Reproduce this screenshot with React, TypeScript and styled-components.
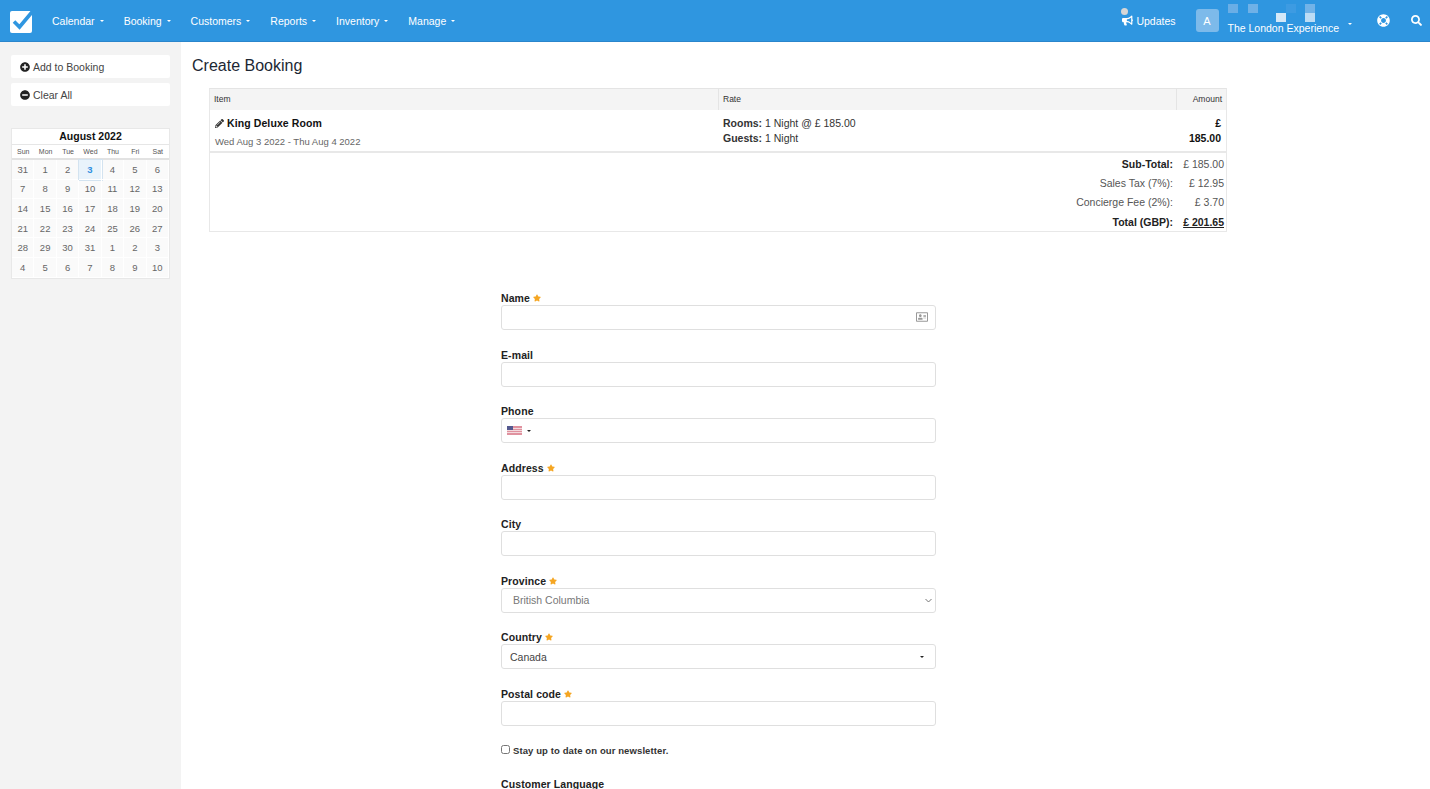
import React from "react";
import styled, { createGlobalStyle } from "styled-components";
import { FaPlusCircle, FaMinusCircle, FaPencilAlt, FaBullhorn, FaLifeRing, FaSearch, FaRegAddressCard, FaStar } from "react-icons/fa";

const Global = createGlobalStyle`
  html, body { margin: 0; height: 100%; overflow: hidden; background: #fff; }
  body { font-family: "Liberation Sans", Arial, sans-serif; color: #333; }
  * { box-sizing: border-box; }
`;

const Page = styled.div`
  height: 789px; overflow: hidden; display: flex; flex-direction: column;
`;
const Nav = styled.header`
  height: 42px; flex: none; display: flex; align-items: center;
  background: #2f96e0; border-bottom: 1px solid #2a86cc; color: #fff;
  font-size: 10.5px; padding-left: 9px;
`;
const Logo = styled.svg`
  width: 24px; height: 24px; flex: none; margin-right: 19px;
`;
const NavItem = styled.span`
  display: inline-flex; align-items: center; margin-right: 20px; white-space: nowrap;
`;
const Caret = styled.i<{ $color?: string }>`
  display: inline-block; width: 0; height: 0; margin-left: 5px; margin-top: 1px;
  border-left: 2.5px solid transparent; border-right: 2.5px solid transparent;
  border-top: 2.5px solid ${p => p.$color || "#fff"};
`;
const NavRight = styled.div`
  margin-left: auto; display: flex; align-items: center; height: 100%;
`;
const Updates = styled.span`
  position: relative; display: inline-flex; align-items: center; gap: 3px; margin-right: 20px;
`;
const Dot = styled.i`
  position: absolute; left: -1px; top: -7px; width: 7px; height: 7px; border-radius: 50%; background: #d6d6d6;
`;
const Avatar = styled.span`
  width: 23px; height: 23px; border-radius: 3px; background: #7dbaea; display: flex;
  align-items: center; justify-content: center; font-size: 11px; margin-right: 9px;
`;
const Account = styled.span`
  position: relative; display: inline-flex; align-items: center; height: 100%; padding-top: 14px; margin-right: 25px;
`;
const Blur = styled.i<{ $x: number; $y: number; $c: string; $h?: number }>`
  position: absolute; left: ${p => p.$x}px; top: ${p => p.$y}px; width: 10px; height: ${p => p.$h || 9}px; background: ${p => p.$c};
`;
const AccountCaret = styled(Caret)`
  margin-left: 9px; margin-top: -8px;
`;
const NavIcon = styled.span<{ $mr: number }>`
  display: inline-flex; font-size: ${p => p.$mr > 20 ? 13 : 11}px; margin-right: ${p => p.$mr}px;
`;

const Body = styled.div`
  flex: 1; display: flex; min-height: 0;
`;
const Side = styled.aside`
  width: 181px; flex: none; background: #f3f3f3; padding: 13px 11px 0 11px;
`;
const SideButton = styled.div`
  height: 23px; background: #fff; border-radius: 2px; display: flex; align-items: center; gap: 3px;
  padding-left: 9px; margin-bottom: 5px; font-size: 10.5px; color: #444;
  svg { color: #222; font-size: 10px; }
`;
const Cal = styled.div`
  margin-top: 22px; width: 159px; background: #fafafa; border: 1px solid #e8e8e8;
`;
const CalTitle = styled.div`
  height: 16px; background: #fff; border-bottom: 1px solid #e6e6e6; text-align: center;
  font-size: 10.5px; font-weight: bold; color: #111; line-height: 15px;
`;
const Weeks = styled.div`
  display: grid; grid-template-columns: repeat(7, 1fr); height: 15px; background: #fff; border-bottom: 2px solid #e2e2e2;
  font-size: 7px; color: #555; text-align: center; line-height: 13px;
`;
const Days = styled.div`
  display: grid; grid-template-columns: repeat(7, 1fr); grid-auto-rows: 19.6px;
`;
const Day = styled.div<{ $today?: boolean }>`
  display: flex; align-items: center; justify-content: center; font-size: 9.5px;
  color: ${p => p.$today ? "#2f8fe0" : "#666"}; font-weight: ${p => p.$today ? "bold" : "normal"};
  border-right: 1px solid #fff; border-bottom: 1px solid #fff;
  background: ${p => p.$today ? "#e9f3fb" : "transparent"};
  outline: ${p => p.$today ? "1px solid #d3e3f0" : "none"};
`;

const Main = styled.main`
  flex: 1; min-width: 0; padding: 0 0 0 11px;
`;
const Title = styled.h1`
  margin: 14px 0 13px; font-size: 16px; line-height: 19px; font-weight: normal; color: #1c2733;
`;
const Cart = styled.section`
  margin-left: 17px; width: 1018px; border: 1px solid #e8e8e8; border-top-color: #e4e4e4; font-size: 10.5px; color: #333;
`;
const CartGrid = styled.div`
  display: grid; grid-template-columns: 508px 458px 1fr;
`;
const Head = styled.div<{ $right?: boolean }>`
  height: 21px; background: #f4f4f4; font-size: 8.5px; color: #333; line-height: 20px; padding: 0 4px;
  text-align: ${p => p.$right ? "right" : "left"};
  & + & { border-left: 1px solid #e4e4e4; }
`;
const Cell = styled.div<{ $right?: boolean }>`
  height: 43px; padding: 6px 5px 0; border-bottom: 2px solid #e8e8e8; line-height: 15px; 
  text-align: ${p => p.$right ? "right" : "left"};
`;
const ItemName = styled.div`
  font-weight: bold; color: #111; font-size: 10.5px; display: flex; align-items: center; gap: 3px;
  margin-bottom: 3px; letter-spacing: 0.1px; svg { font-size: 9px; color: #333; }
`;
const Dates = styled.div`
  font-size: 9.5px; color: #666;
`;
const Amount = styled.b`
  color: #111; margin-right: 0;
`;
const Totals = styled.div`
  display: grid; grid-template-columns: 1fr auto; grid-auto-rows: 19.3px; padding: 1px 2px 0 0; align-items: center;
`;
const TotalLabel = styled.div<{ $bold?: boolean }>`
  text-align: right; color: ${p => p.$bold ? "#222" : "#555"}; font-weight: ${p => p.$bold ? "bold" : "normal"};
`;
const TotalValue = styled.div<{ $bold?: boolean; $strong?: boolean }>`
  width: 51px; text-align: right; color: ${p => p.$strong ? "#222" : "#555"};
  span { font-weight: ${p => p.$strong ? "bold" : "normal"}; text-decoration: ${p => p.$strong ? "underline" : "none"}; }
`;

const Form = styled.form`
  width: 435px; margin: 60px 0 0 309px;
`;
const Field = styled.div`
  margin-bottom: 18.5px; 
`;
const Label = styled.label`
  display: flex; align-items: center; gap: 3px; height: 12px; margin-bottom: 1px; font-size: 10.5px; font-weight: bold; color: #222;
  letter-spacing: 0.1px; svg { color: #f5a623; font-size: 8px; }
`;
const InputWrap = styled.div`
  position: relative; height: 25px;
`;
const Input = styled.input`
  display: block; width: 100%; height: 25px; border: 1px solid #dfdfdf; border-radius: 3px; background: #fff; outline: none; padding: 0 8px;
  font: 10.5px "Liberation Sans", Arial, sans-serif;
`;
const Select = styled.select`
  display: block; width: 100%; height: 25px; border: 1px solid #dfdfdf; border-radius: 3px; background: #fff; outline: none;
  padding: 0 11px; appearance: none; font: 10.5px "Liberation Sans", Arial, sans-serif; color: #777;
`;
const Trailing = styled.span`
  position: absolute; right: 8px; top: 6px; color: #999; font-size: 12px; display: flex;
`;
const Chevron = styled.svg`
  position: absolute; right: 4px; top: 10px; width: 7px; height: 5px;
`;
const FlagBox = styled.div`
  position: absolute; left: 6px; top: 8px; display: flex; align-items: center;
`;
const FakeSelect = styled.div`
  height: 25px; border: 1px solid #dfdfdf; border-radius: 3px; display: flex; align-items: center; justify-content: space-between;
  padding: 0 11px 0 8px; font-size: 10.5px; color: #444; background: #fff;
`;
const CheckRow = styled.label`
  display: flex; align-items: center; gap: 3px; font-size: 9.5px; font-weight: bold; color: #333;
  margin: -1px 0 21px; height: 14px; letter-spacing: 0.1px;
  input { width: 9px; height: 9px; margin: 0 0 2px; }
`;

const months = ["Sun", "Mon", "Tue", "Wed", "Thu", "Fri", "Sat"];
const days = [31,1,2,3,4,5,6,7,8,9,10,11,12,13,14,15,16,17,18,19,20,21,22,23,24,25,26,27,28,29,30,31,1,2,3,4,5,6,7,8,9,10];
const menu = ["Calendar", "Booking", "Customers", "Reports", "Inventory", "Manage"];

const Req = () => <FaStar />;

export default function App() {
  return (
    <Page>
      <Global />
      <Nav>
        <Logo viewBox="0 0 24 24">
          <rect x="1" y="2" width="22" height="22" rx="2" fill="#fff" />
          <path d="M5 12.5 L10.5 18 L23.5 2.5" fill="none" stroke="#2f96e0" strokeWidth="3.6" />
        </Logo>
        {menu.map(m => <NavItem key={m}>{m}<Caret /></NavItem>)}
        <NavRight>
          <Updates><Dot /><FaBullhorn size={11} />Updates</Updates>
          <Avatar>A</Avatar>
          <Account>
            <Blur $x={0} $y={4} $c="#6aaee6" />
            <Blur $x={20} $y={4} $c="#6fb1e7" />
            <Blur $x={48} $y={13} $c="#d4e8f8" />
            <Blur $x={58} $y={4} $c="#3d9be2" />
            <Blur $x={77} $y={4} $c="#72b3e8" />
            <Blur $x={77} $y={13} $c="#bcdcf5" />
            The London Experience
            <AccountCaret />
          </Account>
          <NavIcon $mr={21}><FaLifeRing /></NavIcon>
          <NavIcon $mr={8}><FaSearch /></NavIcon>
        </NavRight>
      </Nav>
      <Body>
        <Side>
          <SideButton><FaPlusCircle />Add to Booking</SideButton>
          <SideButton><FaMinusCircle />Clear All</SideButton>
          <Cal>
            <CalTitle>August 2022</CalTitle>
            <Weeks>{months.map(m => <span key={m}>{m}</span>)}</Weeks>
            <Days>{days.map((d, i) => <Day key={i} $today={i === 3}>{d}</Day>)}</Days>
          </Cal>
        </Side>
        <Main>
          <Title>Create Booking</Title>
          <Cart>
            <CartGrid>
              <Head>Item</Head><Head>Rate</Head><Head $right>Amount</Head>
              <Cell>
                <ItemName><FaPencilAlt />King Deluxe Room</ItemName>
                <Dates>Wed Aug 3 2022 - Thu Aug 4 2022</Dates>
              </Cell>
              <Cell>
                <div><b>Rooms:</b> 1 Night @ £ 185.00</div>
                <div><b>Guests:</b> 1 Night</div>
              </Cell>
              <Cell $right><Amount>£ 185.00</Amount></Cell>
            </CartGrid>
            <Totals>
              <TotalLabel $bold>Sub-Total:</TotalLabel><TotalValue><span>£ 185.00</span></TotalValue>
              <TotalLabel>Sales Tax (7%):</TotalLabel><TotalValue><span>£ 12.95</span></TotalValue>
              <TotalLabel>Concierge Fee (2%):</TotalLabel><TotalValue><span>£ 3.70</span></TotalValue>
              <TotalLabel $bold>Total (GBP):</TotalLabel><TotalValue $strong><span>£ 201.65</span></TotalValue>
            </Totals>
          </Cart>
          <Form>
            <Field>
              <Label>Name <Req /></Label>
              <InputWrap><Input /><Trailing><FaRegAddressCard /></Trailing></InputWrap>
            </Field>
            <Field><Label>E-mail</Label><InputWrap><Input /></InputWrap></Field>
            <Field>
              <Label>Phone</Label>
              <InputWrap>
                <Input />
                <FlagBox>
                  <svg width="15" height="9" viewBox="0 0 15 9">
                    <rect width="15" height="9" fill="#e0929f" />
                    <rect y="2" width="15" height="1" fill="#f3d9dd" /><rect y="4" width="15" height="1" fill="#f3d9dd" /><rect y="6" width="15" height="1" fill="#f3d9dd" />
                    <rect width="6" height="4" fill="#55598f" />
                  </svg>
                  <Caret $color="#222" />
                </FlagBox>
              </InputWrap>
            </Field>
            <Field><Label>Address <Req /></Label><InputWrap><Input /></InputWrap></Field>
            <Field><Label>City</Label><InputWrap><Input /></InputWrap></Field>
            <Field>
              <Label>Province <Req /></Label>
              <InputWrap>
                <Select defaultValue="British Columbia"><option>British Columbia</option></Select>
                <Chevron viewBox="0 0 7 5"><path d="M0.5 1 L3.5 4 L6.5 1" fill="none" stroke="#666" strokeWidth="0.9" /></Chevron>
              </InputWrap>
            </Field>
            <Field>
              <Label>Country <Req /></Label>
              <FakeSelect>Canada<Caret $color="#222" /></FakeSelect>
            </Field>
            <Field><Label>Postal code <Req /></Label><InputWrap><Input /></InputWrap></Field>
            <CheckRow><input type="checkbox" />Stay up to date on our newsletter.</CheckRow>
            <Field><Label>Customer Language</Label><InputWrap><Input /></InputWrap></Field>
          </Form>
        </Main>
      </Body>
    </Page>
  );
}
